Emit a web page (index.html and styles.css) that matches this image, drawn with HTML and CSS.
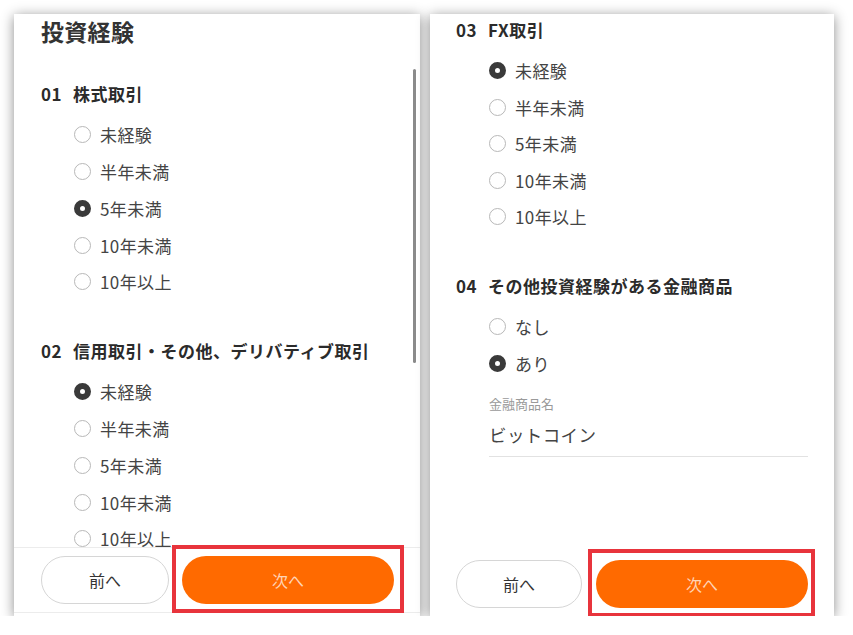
FILE: index.html
```html
<!DOCTYPE html>
<html lang="ja">
<head>
    <meta charset="UTF-8">
    <meta name="viewport" content="width=device-width, initial-scale=1.0">
    <title>投資経験</title>
    <link rel="stylesheet" href="styles.css">
</head>
<body>
    <div class="screens">
        <div class="panel">
            <div class="panel-body">
                <h1 class="title">投資経験</h1>

                <div class="question">
                    <h2 class="q-title"><span class="num">01</span>株式取引</h2>
                    <div class="options">
                        <label class="option"><input type="radio" name="q1">未経験</label>
                        <label class="option"><input type="radio" name="q1">半年未満</label>
                        <label class="option"><input type="radio" name="q1" checked>5年未満</label>
                        <label class="option"><input type="radio" name="q1">10年未満</label>
                        <label class="option"><input type="radio" name="q1">10年以上</label>
                    </div>
                </div>

                <div class="question">
                    <h2 class="q-title"><span class="num">02</span>信用取引・その他、デリバティブ取引</h2>
                    <div class="options">
                        <label class="option"><input type="radio" name="q2" checked>未経験</label>
                        <label class="option"><input type="radio" name="q2">半年未満</label>
                        <label class="option"><input type="radio" name="q2">5年未満</label>
                        <label class="option"><input type="radio" name="q2">10年未満</label>
                        <label class="option"><input type="radio" name="q2">10年以上</label>
                    </div>
                </div>

                <div class="scrollbar"></div>
            </div>
            <div class="panel-foot bordered">
                <button class="btn btn-prev">前へ</button>
                <div class="next-wrap"><button class="btn btn-next">次へ</button></div>
            </div>
        </div>

        <div class="panel">
            <div class="panel-body">
                <div class="question">
                    <h2 class="q-title"><span class="num">03</span>FX取引</h2>
                    <div class="options">
                        <label class="option"><input type="radio" name="q3" checked>未経験</label>
                        <label class="option"><input type="radio" name="q3">半年未満</label>
                        <label class="option"><input type="radio" name="q3">5年未満</label>
                        <label class="option"><input type="radio" name="q3">10年未満</label>
                        <label class="option"><input type="radio" name="q3">10年以上</label>
                    </div>
                </div>

                <div class="question">
                    <h2 class="q-title"><span class="num">04</span>その他投資経験がある金融商品</h2>
                    <div class="options">
                        <label class="option"><input type="radio" name="q4">なし</label>
                        <label class="option"><input type="radio" name="q4" checked>あり</label>
                    </div>
                    <div class="field">
                        <div class="field-label">金融商品名</div>
                        <div class="field-value">ビットコイン</div>
                    </div>
                </div>
            </div>
            <div class="panel-foot">
                <button class="btn btn-prev">前へ</button>
                <div class="next-wrap"><button class="btn btn-next">次へ</button></div>
            </div>
        </div>
    </div>
</body>
</html>
```

FILE: styles.css
```css
body {
    margin: 0;
    background: #fff;
    font-family: "Noto Sans CJK JP", "Noto Sans", sans-serif;
    color: #333;
}
.screens {
    display: flex;
    gap: 10px;
    padding: 14px 0 0 14px;
}
.panel {
    width: 406px;
    height: 602px;
    background: #fff;
    box-shadow: 0 2px 12px rgba(0, 0, 0, 0.45);
    display: flex;
    flex-direction: column;
}
.panel + .panel {
    width: 404px;
}
.panel-body {
    flex: 1;
    overflow: hidden;
    position: relative;
    padding: 1px 26px 0 27px;
}
.panel + .panel .panel-body {
    padding: 4px 26px 0 26px;
}
.title {
    margin: 0;
    font-size: 23px;
    line-height: 32px;
    font-weight: bold;
    color: #333;
    margin-bottom: 35px;
    letter-spacing: 0.3px;
}
.question {
    margin-bottom: 38.6px;
}
.q-title {
    margin: 0;
    font-size: 17px;
    line-height: 24px;
    font-weight: bold;
    color: #2b2b2b;
    letter-spacing: 0.5px;
}
.num {
    margin-right: 11px;
}
.options {
    margin-top: 10.6px;
    padding-left: 33px;
}
.option {
    display: flex;
    align-items: center;
    gap: 9px;
    height: 36.75px;
    font-size: 17px;
    color: #444;
    letter-spacing: 0.4px;
}
.panel + .panel .option {
    height: 36.5px;
}
.option input {
    appearance: none;
    margin: 0;
    width: 17px;
    height: 17px;
    box-sizing: border-box;
    border-radius: 50%;
    border: 1px solid #b8b8b8;
    background: #fff;
}
.option input:checked {
    border: 6px solid #3a3a3a;
}
.field {
    margin-top: 13.6px;
    padding-left: 33px;
}
.field-label {
    font-size: 13px;
    line-height: 18px;
    color: #9a9a9a;
}
.field-value {
    margin-top: 9px;
    font-size: 17.5px;
    line-height: 26px;
    color: #444;
    padding-bottom: 8px;
    border-bottom: 1px solid #e2e2e2;
    letter-spacing: 0.4px;
}
.scrollbar {
    position: absolute;
    right: 4px;
    top: 55px;
    width: 3px;
    height: 294px;
    border-radius: 2px;
    background: #8a8a8a;
}
.panel-foot {
    display: flex;
    gap: 13px;
    padding: 9px 26px 8px 27px;
}
.panel + .panel .panel-foot {
    gap: 14px;
    padding-left: 26px;
}
.panel-foot.bordered {
    padding-top: 8px;
    border-top: 1px solid #ececec;
    border-bottom: 1px solid #ececec;
    margin-bottom: 3px;
}
.btn {
    height: 48px;
    border-radius: 24px;
    font-family: inherit;
    font-size: 16px;
    cursor: pointer;
}
.btn-prev {
    width: 128px;
    background: #fff;
    border: 1px solid #d6d6d6;
    color: #333;
}
.panel + .panel .btn-prev {
    width: 127px;
}
.next-wrap {
    position: relative;
    display: flex;
}
.next-wrap::after {
    content: "";
    position: absolute;
    inset: -11px -10px -9px -10px;
    border: 4px solid #e8343c;
}
.panel + .panel .next-wrap::after {
    inset: -11px -7px -9px -8px;
}
.btn-next {
    width: 212px;
    border: none;
    background: #ff6a00;
    color: rgba(255, 255, 255, 0.72);
}
```
